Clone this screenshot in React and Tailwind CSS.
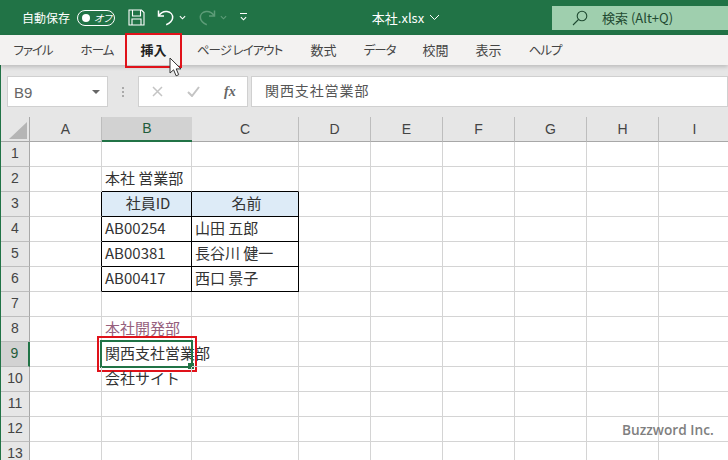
const tabs = [
  { label: "ファイル", w: "w-[66px]", cls: "text-[12.5px] tracking-[-1px]" },
  { label: "ホーム", w: "w-[59px]", cls: "text-[12.5px] tracking-[-1px] pl-[3px]" },
  { label: "挿入", w: "w-[57px]", active: true },
  { label: "ページ レイアウト", w: "w-[115px]", cls: "text-[12.5px] tracking-[-1px]" },
  { label: "数式", w: "w-[53px]" },
  { label: "データ", w: "w-[59px]", cls: "text-[12.5px] tracking-[-1px]" },
  { label: "校閲", w: "w-[53px]" },
  { label: "表示", w: "w-[53px]" },
  { label: "ヘルプ", w: "w-[60px]", cls: "text-[12.5px] tracking-[-1px]" },
];

const columns = [
  { name: "A", w: "w-[72px]" },
  { name: "B", w: "w-[90px]", selected: true },
  { name: "C", w: "w-[107px]" },
  { name: "D", w: "w-[72px]" },
  { name: "E", w: "w-[72px]" },
  { name: "F", w: "w-[72px]" },
  { name: "G", w: "w-[72px]" },
  { name: "H", w: "w-[72px]" },
  { name: "I", w: "w-[72px]" },
];

const rows = [1, 2, 3, 4, 5, 6, 7, 8, 9, 10, 11, 12, 13];

const cells = {
  B2: { text: "本社 営業部" },
  B3: { text: "社員ID", cls: "bg-[#ddebf7] justify-center pl-0" },
  C3: { text: "名前", cls: "bg-[#ddebf7] justify-center pl-0" },
  B4: { text: "AB00254", cls: "text-[14.2px]" },
  C4: { text: "山田 五郎" },
  B5: { text: "AB00381", cls: "text-[14.2px]" },
  C5: { text: "長谷川 健一" },
  B6: { text: "AB00417", cls: "text-[14.2px]" },
  C6: { text: "西口 景子" },
  B8: { text: "本社開発部", cls: "text-[#96607d]" },
  B9: { text: "関西支社営業部" },
  B10: { text: "会社サイト" },
};

const blackRight = ["A3", "A4", "A5", "A6", "B3", "B4", "B5", "B6", "C3", "C4", "C5", "C6"];
const blackBottom = ["B2", "C2", "B3", "C3", "B4", "C4", "B5", "C5", "B6", "C6"];

const SaveIcon = () => (
  <svg width="17" height="17" viewBox="0 0 17 17" fill="none" stroke="#fff" strokeWidth="1.1">
    <path d="M1 1h12.5L16 3.5V16H1z" />
    <path d="M4.5 1v6h8V1M4 16v-6h9v6" />
  </svg>
);

const UndoIcon = ({ color }) => (
  <svg width="18" height="17" viewBox="0 0 18 17" fill="none" stroke={color} strokeWidth="1.5">
    <path d="M1.5 1.5v5.5h5.5" />
    <path d="M1.8 6.8C4 3.5 7 2.2 10 2.6c3.6.5 6 3.2 5.6 6.6-.4 3-2.6 5-6.4 6.6" />
  </svg>
);

const RedoIcon = ({ color }) => (
  <svg width="18" height="17" viewBox="0 0 18 17" fill="none" stroke={color} strokeWidth="1.5">
    <path d="M16.5 1.5v5.5H11" />
    <path d="M16.2 6.8C14 3.5 11 2.2 8 2.6c-3.6.5-6 3.2-5.6 6.6.4 3 2.6 5 6.4 6.6" />
  </svg>
);

const Chevron = ({ color, size = 7 }) => (
  <svg width={size} height={size} viewBox="0 0 8 8" fill="none" stroke={color} strokeWidth="1.3">
    <path d="M1 2.5l3 3 3-3" />
  </svg>
);

const Cursor = () => (
  <svg width="13" height="21" viewBox="0 0 13 21" className="absolute left-[44px] top-[22px]">
    <path d="M1 1v15l3.6-3.2 2.5 6 2.6-1.1-2.5-5.8h4.8z" fill="#fff" stroke="#333" strokeWidth="1" />
  </svg>
);

const cellBorder = (id) => {
  const right = blackRight.includes(id) ? "border-r-black" : "border-r-[#d4d4d4]";
  const bottom = blackBottom.includes(id) ? "border-b-black" : "border-b-[#d4d4d4]";
  return `${right} ${bottom}`;
};

const App = () => {
  return (
    <div
      className="w-[728px] h-[460px] overflow-hidden bg-white text-[#333]"
      style={{ fontFamily: '"Noto Sans CJK JP", "Noto Sans", sans-serif' }}
    >
      {/* title bar */}
      <div className="h-[35px] bg-[#217346] flex items-center text-white pl-[22px]">
        <span className="text-[12px] leading-none w-[48px] whitespace-nowrap">自動保存</span>
        <div className="ml-[7px] w-[38px] h-[16px] rounded-full border border-white flex items-center pl-[4px] gap-[4px]">
          <span className="w-[8px] h-[8px] rounded-full bg-white"></span>
          <span className="text-[10px] leading-none italic [font-feature-settings:'palt']">オフ</span>
        </div>
        <div className="ml-[13px]"><SaveIcon /></div>
        <div className="ml-[12px]"><UndoIcon color="#fff" /></div>
        <div className="ml-[4px]"><Chevron color="#fff" /></div>
        <div className="ml-[12px]"><RedoIcon color="#5d9c78" /></div>
        <div className="ml-[4px]"><Chevron color="#5d9c78" /></div>
        <div className="ml-[13px] flex flex-col items-center gap-[1px]">
          <span className="w-[7px] h-[1px] bg-white"></span>
          <Chevron color="#fff" />
        </div>
        <div className="ml-[125px] flex items-center gap-[5px] w-[181px]">
          <span className="text-[13px] leading-none whitespace-nowrap">本社.xlsx</span>
          <svg width="11" height="7" viewBox="0 0 11 7" fill="none" stroke="#fff" strokeWidth="1">
            <path d="M1 1l4.5 4.5L10 1" />
          </svg>
        </div>
        <div className="h-[24px] w-[176px] shrink-0 bg-[#9fcfae] flex items-center pl-[20px] text-[#1f4a31]">
          <svg width="16" height="16" viewBox="0 0 16 16" fill="none" stroke="#1f4a31" strokeWidth="1.1">
            <circle cx="10" cy="6" r="4.8" />
            <path d="M6.5 9.5L1 15" />
          </svg>
          <span className="ml-[14px] text-[13px] leading-none whitespace-nowrap">検索 (Alt+Q)</span>
        </div>
      </div>

      {/* ribbon tabs */}
      <div className="h-[30px] bg-[#f3f2f1] flex shadow-[0_2px_4px_rgba(0,0,0,0.18)] relative z-10 text-[13px] text-[#444] [font-feature-settings:'palt']">
        {tabs.map((tab) => (
          <div
            key={tab.label}
            className={`${tab.w} relative flex items-center justify-center whitespace-nowrap ${tab.cls || ""} ${tab.active ? "font-bold text-[#222]" : ""}`}
          >
            {tab.label}
            {tab.active && (
              <>
                <div className="absolute left-[0px] right-[0px] top-[-2px] bottom-[-3px] border-[2.5px] border-[#e0121a]"></div>
                <Cursor />
              </>
            )}
          </div>
        ))}
      </div>

      {/* formula bar */}
      <div className="h-[52px] bg-[#e6e6e6] flex border-l border-l-[#217346] pl-[6px] pt-[11px] pb-[10px]">
        <div className="w-[101px] bg-white border border-[#d0d0d0] flex items-center justify-between pl-[6px] pr-[7px] text-[15px] text-[#666]" style={{ fontFamily: '"Liberation Sans", sans-serif' }}>
          <span className="pt-[3px]">B9</span>
          <span className="w-0 h-0 border-x-[4px] border-x-transparent border-t-[4px] border-t-[#666]"></span>
        </div>
        <div className="w-[30px] flex flex-col items-center justify-center gap-[2px]">
          <span className="w-[2px] h-[2px] bg-[#aaa]"></span>
          <span className="w-[2px] h-[2px] bg-[#aaa]"></span>
          <span className="w-[2px] h-[2px] bg-[#aaa]"></span>
        </div>
        <div className="w-[110px] bg-white border border-[#d0d0d0] flex items-center pl-[13px]">
          <svg width="11" height="11" viewBox="0 0 11 11" fill="none" stroke="#c4c4c4" strokeWidth="1.5">
            <path d="M1 1l9 9M10 1l-9 9" />
          </svg>
          <svg width="13" height="11" viewBox="0 0 13 11" fill="none" stroke="#c4c4c4" strokeWidth="2" className="ml-[24px]">
            <path d="M1 6l4 4 7-9" />
          </svg>
          <span className="ml-[24px] text-[14px] italic font-bold text-[#666]" style={{ fontFamily: '"Liberation Serif", serif' }}>fx</span>
        </div>
        <div className="ml-[3px] flex-1 bg-white border border-[#d0d0d0] flex items-center pl-[13px] pb-[2px] text-[14px] tracking-[0.9px] text-[#555]">
          関西支社営業部
        </div>
      </div>

      {/* sheet */}
      <div className="relative border-l border-l-[#217346]">
        <div className="flex h-[25px]">
          <div className="w-[29px] shrink-0 bg-[#e6e6e6] border-r border-b border-[#a8a8a8] relative">
            <svg width="18" height="17" viewBox="0 0 18 17" className="absolute right-[2px] bottom-[2px]">
              <path d="M18 0v17H0z" fill="#b5b5b5" />
            </svg>
          </div>
          {columns.map((col) => (
            <div
              key={col.name}
              className={`${col.w} shrink-0 flex items-center justify-center text-[14px] ${
                col.selected
                  ? "bg-[#d2d2d2] border-b-2 border-b-[#217346] text-[#1f5c3a]"
                  : "bg-[#e6e6e6] border-b border-b-[#a8a8a8] text-[#444] border-r border-r-[#bdbdbd]"
              }`}
              style={{ fontFamily: '"Liberation Sans", sans-serif' }}
            >
              {col.name}
            </div>
          ))}
        </div>

        {rows.map((row) => (
          <div key={row} className="flex h-[25px]">
            <div
              className={`w-[29px] shrink-0 flex items-center justify-center pb-[1px] text-[14px] border-b border-b-[#bdbdbd] ${
                row === 9
                  ? "bg-[#d2d2d2] text-[#1f5c3a] border-r-2 border-r-[#217346]"
                  : "bg-[#e6e6e6] text-[#444] border-r border-r-[#a8a8a8]"
              }`}
              style={{ fontFamily: '"Liberation Sans", sans-serif' }}
            >
              {row}
            </div>
            {columns.map((col) => {
              const id = col.name + row;
              const cell = cells[id];
              return (
                <div
                  key={id}
                  className={`${col.w} shrink-0 relative flex items-center pl-[3px] pb-[1px] whitespace-nowrap border-r border-b text-[15px] ${cellBorder(id)} ${cell?.cls || ""}`}
                >
                  {cell?.text}
                  {id === "B9" && (
                    <>
                      <div className="absolute left-[-2px] top-[-2px] right-[-2px] bottom-[-2px] border-2 border-[#217346]"></div>
                      <div className="absolute right-[-3px] bottom-[-3px] w-[6px] h-[6px] bg-[#217346]"></div>
                      <div className="absolute left-[-5px] top-[-6px] right-[-6px] bottom-[-6px] border-[2.5px] border-[#e0121a]"></div>
                    </>
                  )}
                </div>
              );
            })}
          </div>
        ))}

        <div
          className="absolute left-[621px] top-[306px] text-[13.7px] leading-none font-semibold text-[#7f7f7f] whitespace-nowrap"
          style={{ fontFamily: '"Open Sans", sans-serif' }}
        >
          Buzzword Inc.
        </div>
      </div>
    </div>
  );
};

export default App;
